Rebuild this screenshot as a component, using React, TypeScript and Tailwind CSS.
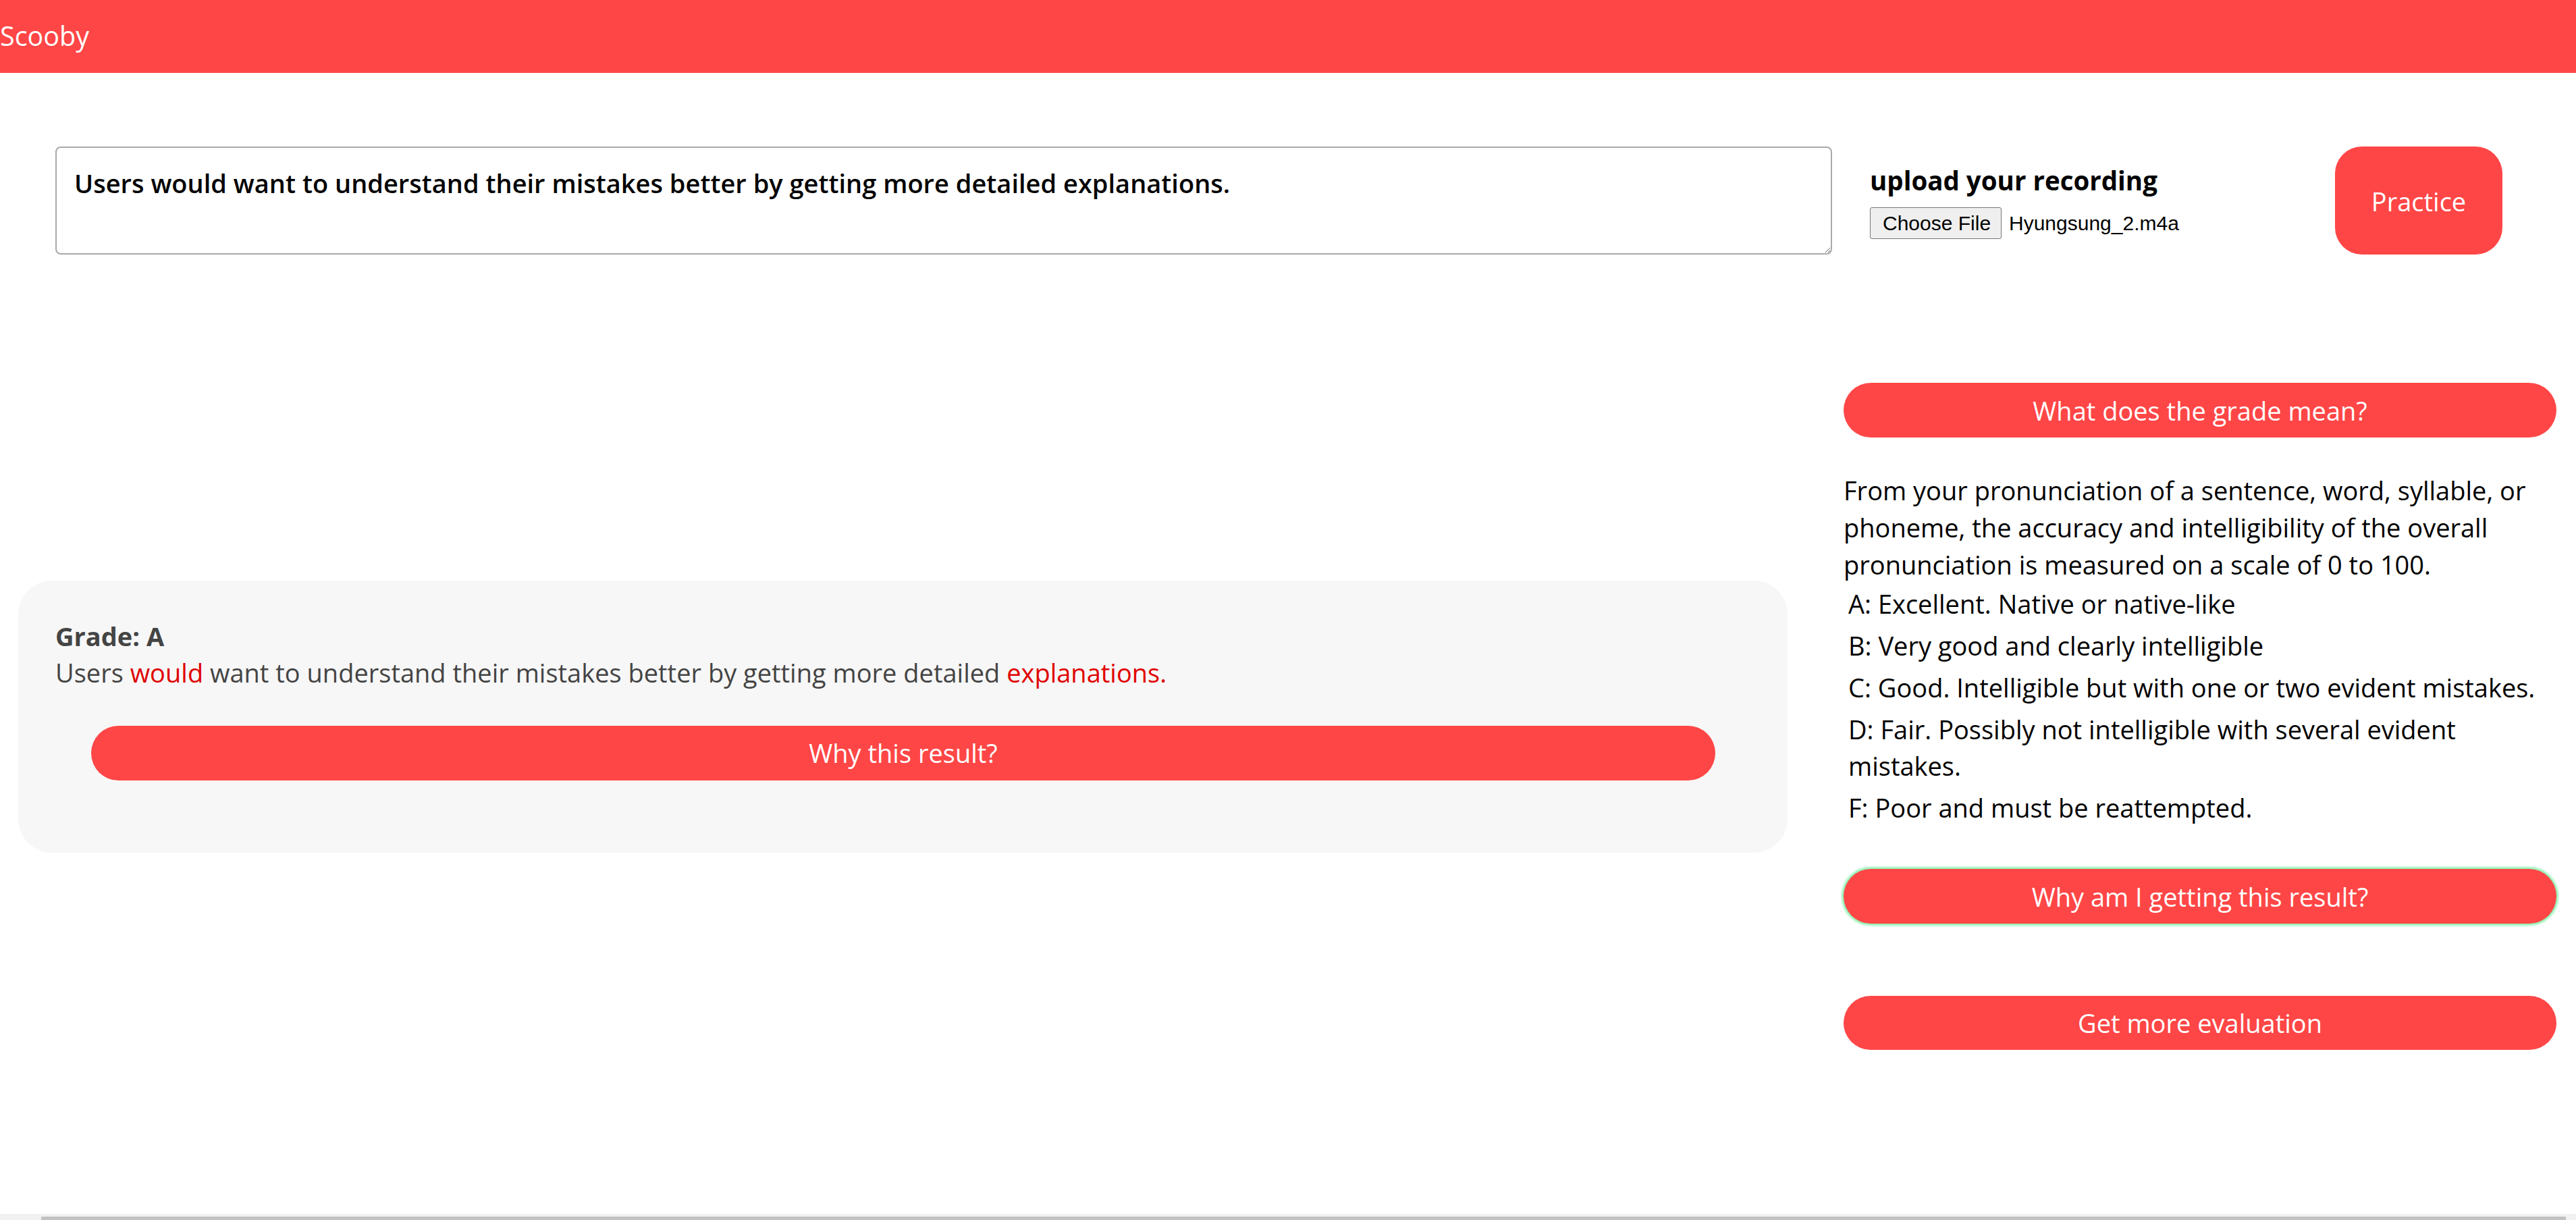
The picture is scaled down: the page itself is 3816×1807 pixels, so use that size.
import React from 'react';

const sentence =
  'Users would want to understand their mistakes better by getting more detailed explanations.';

const grades = [
  'A: Excellent. Native or native-like',
  'B: Very good and clearly intelligible',
  'C: Good. Intelligible but with one or two evident mistakes.',
];

const RedButton: React.FC<{ label: string; className?: string }> = ({ label, className = '' }) => (
  <button
    type="button"
    className={`flex items-center justify-center rounded-full bg-[#ff4646] text-[38px] leading-none text-white ${className}`}
  >
    {label}
  </button>
);

const App: React.FC = () => {
  return (
    <div className="flex min-h-[1807px] flex-col bg-white font-['Open_Sans',sans-serif] text-black">
      <header className="flex h-[108px] items-center bg-[#ff4646]">
        <span className="text-[39.5px] text-white">Scooby</span>
      </header>

      <section className="flex items-start pt-[109px]">
        <textarea
          readOnly
          defaultValue={sentence}
          className="ml-[82px] h-[160px] w-[2632px] rounded-[8px] border-2 border-[#a9a9a9] px-[26px] pt-[26px] text-[38px] font-semibold leading-[53px] text-black outline-none"
        />
        <div className="ml-[56px] w-[689px] pt-[24px]">
          <h3 className="text-[38.5px] font-bold leading-[53px]">upload your recording</h3>
          <div className="mt-[13px] flex items-center font-['Liberation_Sans',sans-serif] text-[30px]">
            <span className="flex h-[47px] w-[195px] items-center rounded-[3px] border border-[#767676] bg-[#efefef] pl-[18px]">
              Choose File
            </span>
            <span className="ml-[11px]">Hyungsung_2.m4a</span>
          </div>
        </div>
        <button
          type="button"
          className="flex h-[160px] w-[248px] items-center justify-center rounded-[40px] bg-[#ff4646] pt-[3px] text-[38px] text-white"
        >
          Practice
        </button>
      </section>

      <section className="mt-[190px] flex items-center">
        <div className="ml-[27px] w-[2621px] rounded-[50px] bg-[#f7f7f7] px-[55px] pt-[56px] pb-[107px] text-[38px] text-[#444]">
          <div className="font-bold leading-[53px]">Grade: A</div>
          <div className="leading-[54px]">
            Users <span className="text-[#e00000]">would</span> want to understand their mistakes better by
            getting more detailed <span className="text-[#e00000]">explanations.</span>
          </div>
          <RedButton label="Why this result?" className="mx-[53px] mt-[52px] h-[81px] w-[2406px]" />
        </div>

        <div className="ml-[83px] w-[1056px] text-[38px]">
          <RedButton label="What does the grade mean?" className="h-[81px] w-full" />
          <p className="mt-[51px] whitespace-nowrap leading-[55px]">
            From your pronunciation of a sentence, word, syllable, or
            <br />
            phoneme, the accuracy and intelligibility of the overall
            <br />
            pronunciation is measured on a scale of 0 to 100.
          </p>
          <div className="mt-[3px] flex flex-col gap-2 whitespace-nowrap pl-[7px] leading-[54px]">
            {grades.map((g) => (
              <div key={g}>{g}</div>
            ))}
            <div>
              D: Fair. Possibly not intelligible with several evident
              <br />
              mistakes.
            </div>
            <div>F: Poor and must be reattempted.</div>
          </div>
          <RedButton
            label="Why am I getting this result?"
            className="mt-[64px] h-[81px] w-full shadow-[0_0_3px_3px_#93f2b5]"
          />
          <RedButton label="Get more evaluation" className="mt-[107px] h-[80px] w-full" />
        </div>
      </section>

      <div className="mt-auto h-[9px] bg-[#f1f1f1] pt-[4px]">
        <div className="ml-[61px] h-[5px] w-[3740px] bg-[#c1c1c1]" />
      </div>
    </div>
  );
};

export default App;
